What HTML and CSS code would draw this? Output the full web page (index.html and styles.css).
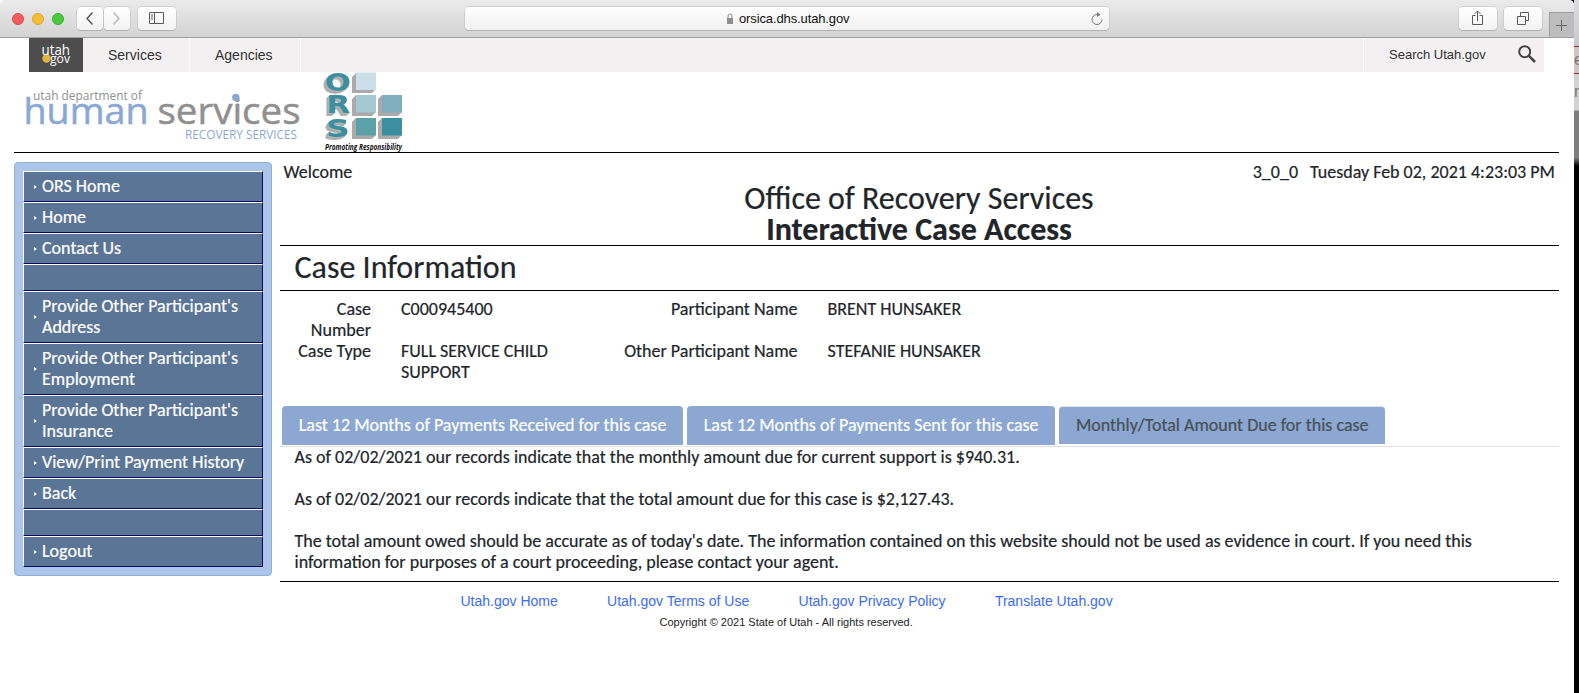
FILE: index.html
```html
<!DOCTYPE html>
<html lang="en">
<head>
<meta charset="utf-8">
<title>ORS Interactive Case Access</title>
<link rel="stylesheet" href="styles.css">
</head>
<body>
<div class="desktop">
<div class="window">
  <header class="toolbar">
    <span class="dot red"></span><span class="dot yellow"></span><span class="dot green"></span>
    <span class="btn back"><svg width="26" height="23"><path d="M15.500 5.500L10 11.500l5.500 6" fill="none" stroke="#5a5a5a" stroke-width="1.500"/></svg></span>
    <span class="btn fwd"><svg width="26" height="23"><path d="M9.500 5.500L15 11.500l-5.500 6" fill="none" stroke="#b9b9b9" stroke-width="1.500"/></svg></span>
    <span class="btn side"><svg width="38" height="23"><path d="M11.500 5.500h14v11h-14zM16.500 5.500v11M13 8h2M13 10h2M13 12h2" fill="none" stroke="#5a5a5a"/></svg></span>
    <div class="address">
      <svg class="lock" width="8" height="12"><rect x="1" y="5" width="6" height="6" fill="#8e8e8e"/><path d="M2 5.500V3a2 2 0 0 1 4 0v2.500" fill="none" stroke="#8e8e8e"/></svg>
      <span>orsica.dhs.utah.gov</span>
      <svg class="reload" width="14" height="14"><path d="M7 2.500a5 5 0 1 0 5 5M7 2.500h2" fill="none" stroke="#777"/><path d="M7 0l3.500 2.700L7 5z" fill="#777"/></svg>
    </div>
    <span class="btn share"><svg width="38" height="23"><path d="M16.500 8.500h-3v9h10v-9h-3M18.500 14V4M15.500 7l3-3 3 3" fill="none" stroke="#5a5a5a"/></svg></span>
    <span class="btn tabs"><svg width="38" height="23"><path d="M13.500 9.500h8v8h-8zM16.500 9.500v-4h8v8h-3" fill="none" stroke="#5a5a5a"/></svg></span>
    <span class="newtab"><svg width="25" height="25"><path d="M11.500 7v11M6 12.500h11" stroke="#666"/></svg></span>
  </header>
  <nav class="utahbar">
    <a class="ulogo"><svg width="54" height="34"><circle cx="17.500" cy="20.500" r="4.200" fill="#e3b43a"/><text x="12.500" y="16.500" textLength="28.500" lengthAdjust="spacingAndGlyphs">utah</text><text class="gov" x="21" y="24.500" textLength="20" lengthAdjust="spacingAndGlyphs">gov</text></svg></a>
    <a class="uitem services">Services</a><a class="uitem agencies">Agencies</a>
    <a class="usearch"><span>Search Utah.gov</span><svg width="18" height="18"><circle cx="6.700" cy="6.700" r="5.500" fill="none" stroke="#444" stroke-width="2"/><path d="M10.700 10.700L17 17" stroke="#444" stroke-width="2.600"/></svg></a>
  </nav>
  <div class="brand">
    <svg width="410" height="80" class="logos">
      <text class="l1" x="33" y="28" textLength="109" lengthAdjust="spacingAndGlyphs">utah department of</text>
      <text class="l2 hb" x="23.500" y="52" textLength="125" lengthAdjust="spacingAndGlyphs">human</text>
      <text class="l2 sv" x="157.500" y="52" textLength="143" lengthAdjust="spacingAndGlyphs">services</text>
      <circle cx="235.800" cy="25.500" r="3.700" fill="#8aa8d6"/>
      <text class="l3" x="185" y="67" textLength="112" lengthAdjust="spacingAndGlyphs">RECOVERY SERVICES</text>
      <g fill="#aaa">
        <path d="M356 1l-4 4v16h20l4-4zM356 23l-4 4v17h20l4-4zM382 23l-4 4v17h20l4-4zM356 46l-4 4v17h20l4-4zM382 46l-4 4v17h20l4-4z"/>
      </g>
      <rect x="356" y="0.500" width="20" height="17.500" fill="#cbdfe8"/>
      <rect x="356" y="23" width="20" height="17.500" fill="#a5c8d1"/>
      <rect x="382" y="23" width="20" height="17.500" fill="#80aebf"/>
      <rect x="356" y="46" width="20" height="17.500" fill="#5da1a8"/>
      <rect x="382" y="46" width="20" height="17.500" fill="#3b8f9e"/>
      <g class="ors">
        <text x="325" y="18.500" textLength="26" lengthAdjust="spacingAndGlyphs">O</text>
        <text x="326.500" y="41" textLength="24" lengthAdjust="spacingAndGlyphs">R</text>
        <text x="326" y="64.500" textLength="24" lengthAdjust="spacingAndGlyphs">S</text>
      </g>
      <text class="motto" x="325" y="77.500" textLength="77" lengthAdjust="spacingAndGlyphs">Promoting Responsibility</text>
    </svg>
  </div>
  <div class="body">
    <aside class="menu">
      <a class="mi">ORS Home</a>
      <a class="mi">Home</a>
      <a class="mi">Contact Us</a>
      <div class="blank"></div>
      <a class="mi">Provide Other Participant's Address</a>
      <a class="mi">Provide Other Participant's Employment</a>
      <a class="mi">Provide Other Participant's Insurance</a>
      <a class="mi">View/Print Payment History</a>
      <a class="mi">Back</a>
      <div class="blank"></div>
      <a class="mi">Logout</a>
    </aside>
    <main class="main">
      <div class="welcome"><span>Welcome</span><span class="stamp"><span>3_0_0</span><span>Tuesday Feb 02, 2021 4:23:03 PM</span></span></div>
      <h1 class="title">Office of Recovery Services<br><b>Interactive Case Access</b></h1>
      <h2 class="section">Case Information</h2>
      <div class="info">
        <div class="k">Case Number</div><div class="v">C000945400</div><div class="k">Participant Name</div><div class="v">BRENT HUNSAKER</div>
        <div class="k">Case Type</div><div class="v">FULL SERVICE CHILD SUPPORT</div><div class="k">Other Participant Name</div><div class="v">STEFANIE HUNSAKER</div>
      </div>
      <div class="tabrow">
        <a class="tab">Last 12 Months of Payments Received for this case</a>
        <a class="tab">Last 12 Months of Payments Sent for this case</a>
        <a class="tab active">Monthly/Total Amount Due for this case</a>
      </div>
      <div class="copy">
        <p>As of 02/02/2021 our records indicate that the monthly amount due for current support is $940.31.</p>
        <p>As of 02/02/2021 our records indicate that the total amount due for this case is $2,127.43.</p>
        <p>The total amount owed should be accurate as of today's date. The information contained on this website should not be used as evidence in court. If you need this information for purposes of a court proceeding, please contact your agent.</p>
      </div>
    </main>
  </div>
  <footer class="footer">
    <div class="links"><a>Utah.gov Home</a><a>Utah.gov Terms of Use</a><a>Utah.gov Privacy Policy</a><a>Translate Utah.gov</a></div>
    <div class="legal">Copyright © 2021 State of Utah - All rights reserved.</div>
  </footer>
</div>
<div class="behind"><div class="b1"></div><div class="b2">e</div><div class="b3">m</div><div class="b4"></div></div>
</div>
</body>
</html>
```
FILE: styles.css
```css
*{box-sizing:border-box}
body{margin:0;font:18px/21px Carlito,Calibri,Lato,sans-serif;color:#212529;overflow:hidden}
.desktop{display:flex;width:1579px;height:693px;background:linear-gradient(90deg,#fff 50%,#000 50%)}
.window{width:1574px;height:693px;background:#fff;border-radius:5px 5px 0 0;overflow:hidden}
.behind{width:5px;overflow:hidden;background:#000;font:16px/26px "Liberation Sans",sans-serif;color:#777}
.b1{height:46px;background:linear-gradient(#dcdce0,#c9c9cc)}
.b2{height:28px;background:#d3c3c4;border:1px solid #a3262c;border-width:1px 0}
.b3{height:37px;line-height:36px;background:#d2d2d2;border-bottom:1px solid #aaa}
.b4{height:55px;background:linear-gradient(#7d7d7d 85%,#000)}
.toolbar{height:38px;display:flex;align-items:center;background:linear-gradient(#ebebeb,#d3d3d3);border-bottom:1px solid #a0a0a0;padding-left:12px}
.dot{width:12px;height:12px;border-radius:50%;margin-right:8px}
.red{background:#f25e5b;border:1px solid #dc4a48}
.yellow{background:#f7be35;border:1px solid #dea32e}
.green{background:#4bcb3b;border:1px solid #3bb02e}
.btn{display:flex;height:23px;background:linear-gradient(#fff,#f3f3f3);border-radius:4px;box-shadow:0 0 0 .5px #bbb,0 1px 0 #aaa}
.back{margin-left:5px}
.fwd{margin-left:1px}
.side{margin-left:8px}
.address{width:644px;height:23px;margin-left:289px;border-radius:4px;background:linear-gradient(#fff,#f0f0f0);box-shadow:0 0 0 .5px #bbb,0 1px 0 #aaa;display:flex;align-items:center;font:13px/20px "Liberation Sans",sans-serif;letter-spacing:-.12px;color:#111}
.lock{margin-left:261px;margin-right:5px}
.reload{margin-left:auto;margin-right:5px}
.share{margin-left:350px}
.tabs{margin-left:7px}
.newtab{align-self:flex-end;margin-left:auto;width:25px;height:25px;background:#bdbdbd;border:1px solid #a0a0a0;border-width:1px 0 0 1px}
.utahbar{height:34px;margin:0 30px 0 29px;background:#f2f0f1;display:flex;font:14px/34px "Liberation Sans",sans-serif;color:#333}
.ulogo{width:54px;background:#4d4d4d}
.ulogo svg{display:block}
.ulogo text{font:14px "Open Sans",sans-serif;fill:#fff}
.ulogo .gov{font-size:13px}
.uitem{border-right:1px solid #fff}
.services{width:107px;padding-left:25px}
.agencies{width:111px;padding-left:25px}
.usearch{margin-left:auto;width:181px;border-left:1px solid #fff;padding-left:25px;display:flex;white-space:nowrap;font-size:13px}
.usearch svg{margin:7px 8px 0 auto}
.brand{height:81px;margin:0 15px 0 14px;border-bottom:1px solid #000}
.logos{display:block;margin-left:-14px;overflow:visible}
.logos text{font-family:"Open Sans",sans-serif}
.l1{font-size:13px;fill:#8f8f8f}
.l2{font-size:37px;stroke-width:.5px}
.hb{fill:#8aa8d6;stroke:#8aa8d6}
.l3{fill:#8aa8d6;font-size:12px}
.sv{fill:#909090;stroke:#909090}
.logos .ors text{font:bold 25px "DejaVu Sans",sans-serif;fill:#3b8f9e}
.ors{filter:drop-shadow(-1px 1px 0 #b5b5b5) drop-shadow(-1px 1px 0 #aaa) drop-shadow(-1px 1px 0 #b5b5b5)}
.logos .motto{font:italic bold 8px "Open Sans",sans-serif;fill:#111}
.body{display:flex;padding:9px 15px 0 14px}
.menu{width:258px;height:414px;padding:8px;background:#abc6ea;border:1px solid #90afd1;border-radius:4px;margin-right:8px}
.mi,.blank{display:flex;align-items:center;background:#5b7596;border:1px solid;border-color:#fff #0a0a5c #0a0a5c #fff;color:#fff}
.mi{padding:4px 10px}
.mi::before{content:"";flex:none;border:2px solid transparent;border-left:3px solid #fff;border-right:0;margin-right:5px}
.blank{height:27px}
.main{flex:1}
.menu,.main{-webkit-text-stroke:.2px}
.welcome{display:flex;justify-content:space-between;padding:0 4px 0 3.500px}
.stamp{display:flex;gap:12px}
.title{margin:0;height:63px;padding-right:1px;font-size:32px;line-height:31px;font-weight:400;text-align:center;border-bottom:1px solid #000}
.section{margin:0;height:45px;padding-left:14.500px;font-size:32px;line-height:44px;font-weight:400;border-bottom:1px solid #000}
.info{display:grid;grid-template-columns:91px 236px 190.500px 400px;padding-top:8px;height:115px;align-content:start}
.k{text-align:right}
.v{padding:0 30px}
.tabrow{display:flex;height:41px;gap:4px;padding-left:2px;border-bottom:1px solid #dee2e6}
.tab{height:39px;padding:0 16.700px;border-radius:4px 4px 0 0;background:#8ba7d2;color:#fff;line-height:38px}
.active{height:38px;color:#495057;border-top:1px solid #dee2e6;line-height:36px}
.copy{padding:0 60px 0 14.500px;height:135px;border-bottom:1px solid #000}
.copy p{margin:0 0 21px}
.footer{font-family:"Liberation Sans",sans-serif}
.links{display:flex;gap:49.300px;padding:9px 0 0 460.500px;font-size:14px;color:#3b6cf5}
.legal{padding-left:659.500px;font-size:11px;color:#222}
```
